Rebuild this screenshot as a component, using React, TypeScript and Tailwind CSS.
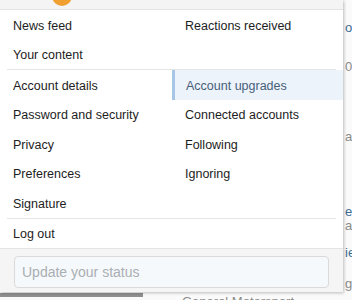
const leftLinks = [
  ["News feed", "Your content"],
  ["Account details", "Password and security", "Privacy", "Preferences", "Signature"],
  ["Log out"],
];

const rightLinks = [
  ["Reactions received", ""],
  ["Account upgrades", "Connected accounts", "Following", "Ignoring", ""],
  [""],
];

function Row({ label, active }: { label: string; active?: boolean }) {
  return (
    <div
      className={
        active
          ? "flex h-[29.5px] items-center border-l-[3px] border-[#a7c6e6] bg-[#edf3fb] pl-[11px] pt-[3px] text-[#47607a]"
          : "flex h-[29.5px] items-center pl-[13px] pt-[3px] text-[#1d1d1d]"
      }
    >
      {label}
    </div>
  );
}

export default function App() {
  return (
    <div className="relative h-[300px] w-[352px] overflow-hidden bg-[#fafafa] text-[12.5px] [font-family:'Liberation_Sans',Arial,sans-serif]">
      {/* page behind the menu */}
      <div className="absolute left-[345px] top-0 flex w-[7px] flex-col overflow-hidden text-[13px]">
        <span className="mt-[18px] text-[#3c6c94]">ot</span>
        <span className="mt-[19px] text-[#8a8a8a]">05</span>
        <span className="mt-[51px] text-[#8a8a8a]">a</span>
        <span className="mt-[55px] text-[#3c6c94]">ea</span>
        <span className="mt-[-5px] text-[#8a8a8a]">a</span>
        <span className="mt-[7px] text-[#3c6c94]">ie</span>
        <span className="mt-[12px] text-[#8a8a8a]">gu</span>
      </div>
      <div className="absolute left-[182px] top-[292px] text-[13px] text-[#8a8a8a]">General Motorsport</div>
      <div className="absolute left-0 top-[293px] h-[4px] w-[143px] bg-[#8f8f8f]" />

      {/* menu */}
      <div className="absolute left-0 top-0 w-[343px] bg-white shadow-[1px_1px_3px_rgba(0,0,0,0.25)]">
        <div className="relative h-[10px] border-b border-[#e3e3e3] bg-[#f4f4f4]">
          <div className="absolute left-[52px] top-[-14px] h-[20px] w-[20px] rounded-full bg-[#f0a030]" />
        </div>
        {leftLinks.map((group, gi) => (
          <div key={gi}>
            {gi > 0 && <div className="mx-[7px] h-px bg-[#e4e4e4]" />}
            <div className="grid grid-cols-[172px_1fr]">
              <div>
                {group.map((l) => (
                  <Row key={l} label={l} />
                ))}
              </div>
              <div>
                {rightLinks[gi].map((l, i) => (
                  <Row key={i} label={l} active={l === "Account upgrades"} />
                ))}
              </div>
            </div>
          </div>
        ))}
        <div className="border-t border-[#e4e4e4] bg-[#f5f5f5] px-[14px] pb-[4px] pt-[7px]">
          <div className="flex h-[32px] items-center rounded-[4px] border border-[#dadada] bg-[#f6f9fc] px-[7px] pt-[1px] text-[14px] text-[#a9aeb3]">
            Update your status
          </div>
        </div>
      </div>
    </div>
  );
}
